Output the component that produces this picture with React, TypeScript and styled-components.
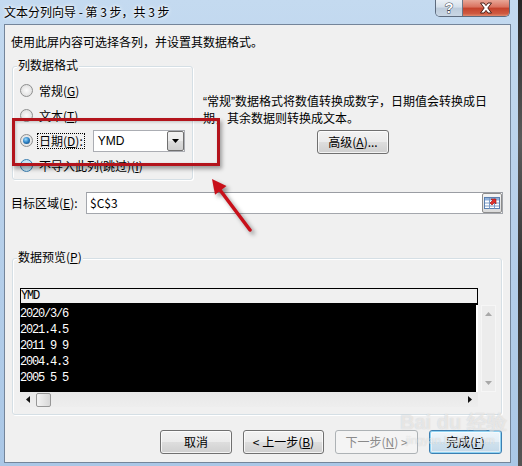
import React from "react";
import styled, { createGlobalStyle, css } from "styled-components";

const Global = createGlobalStyle`
  html, body { margin: 0; padding: 0; }
  body {
    width: 522px; height: 466px; overflow: hidden;
    font-family: "Noto Sans CJK SC", "Microsoft YaHei", sans-serif;
    font-size: 12px; color: #000;
  }
  * { box-sizing: border-box; }
`;

const UI = `"Noto Sans CJK SC", "Microsoft YaHei", sans-serif`;

const Page = styled.div`
  position: relative;
  width: 522px;
  height: 466px;
  display: flex;
  overflow: hidden;
  background: #3c3c3c;
`;

const Frame = styled.div`
  width: 518px;
  height: 466px;
  padding: 0 7px 3px 4px;
  display: flex;
  flex-direction: column;
  background: linear-gradient(180deg, #c4daf0 0%, #bad2eb 35%, #aac7e6 100%);
`;

const DarkEdge = styled.div`
  flex: 1;
  background: linear-gradient(180deg, #262626 0%, #5a5a5a 30%, #333 60%, #555 100%);
`;

const TitleBar = styled.div`
  height: 24px;
  display: flex;
  align-items: flex-start;
`;

const TitleText = styled.div`
  margin-top: 4px;
  line-height: 16px;
  font-family: ${UI};
  font-size: 12px;
  color: #000;
  text-shadow: 0 0 5px #fff, 0 0 3px #fff;
  white-space: pre;
`;

const Spacer = styled.div`
  flex: 1;
`;

const Captions = styled.div`
  display: flex;
  margin-right: 1px;
  height: 17px;
  border: 1px solid #5d6b7e;
  border-top: none;
  border-radius: 0 0 5px 5px;
  overflow: hidden;
`;

const CapBtn = styled.div<{ $w: number; $close?: boolean }>`
  width: ${(p) => p.$w}px;
  height: 16px;
  display: flex;
  align-items: center;
  justify-content: center;
  background: ${(p) =>
    p.$close
      ? "linear-gradient(180deg, #e8a697 0%, #d9705d 45%, #c4412b 50%, #cf5a41 85%, #e08a6e 100%)"
      : "linear-gradient(180deg, #eaf0f6 0%, #d4dfea 45%, #bccbdb 50%, #c9d6e4 100%)"};
  & + & {
    border-left: 1px solid #6b7788;
  }
`;

const HelpGlyph = styled.span`
  font-family: "Liberation Sans", sans-serif;
  font-weight: bold;
  font-size: 14px;
  line-height: 14px;
  color: #fff;
  -webkit-text-stroke: 1px #3b4654;
  paint-order: stroke fill;
`;

const Client = styled.div`
  flex: 1;
  border: 1px solid #74859a;
  background: #f0f0f0;
  display: flex;
  flex-direction: column;
  font-family: ${UI};
  font-size: 12px;
`;

const Intro = styled.div`
  margin: 9px 0 0 6px;
  line-height: 16px;
`;

const TopRow = styled.div`
  margin-top: 16px;
  display: flex;
`;

const GroupBox = styled.div<{ $w: number; $h: number }>`
  position: relative;
  width: ${(p) => p.$w}px;
  height: ${(p) => p.$h}px;
  margin-left: 7px;
  border: 1px solid #d5dfe5;
  border-radius: 3px;
  box-shadow: inset 1px 1px 0 #fff, 1px 1px 0 #fff;
`;

const Legend = styled.span`
  position: absolute;
  left: 4px;
  top: -10px;
  padding: 0 1px;
  line-height: 16px;
  background: #f0f0f0;
`;

const RadioList = styled.div`
  padding: 11px 0 0 7px;
  display: flex;
  flex-direction: column;
`;

const RadioRow = styled.div`
  height: 25px;
  display: flex;
  align-items: center;
`;

const RadioDot = styled.span<{ $checked?: boolean; $hover?: boolean }>`
  position: relative;
  flex: none;
  width: 13px;
  height: 13px;
  border-radius: 50%;
  border: 1px solid ${(p) => (p.$hover ? "#3c7fb1" : "#8e8f8f")};
  background: ${(p) =>
    p.$hover
      ? "radial-gradient(circle at 50% 50%, #e6f4fc 0%, #bfe3f6 70%, #a7d9f5 100%)"
      : "radial-gradient(circle at 50% 50%, #fbfbfb 0%, #e4e4e4 65%, #cfcfcf 100%)"};
  ${(p) =>
    p.$checked &&
    css`
      &::after {
        content: "";
        position: absolute;
        left: 2px;
        top: 2px;
        width: 7px;
        height: 7px;
        border-radius: 50%;
        background: radial-gradient(circle at 40% 35%, #9bdcff 0%, #2b7fc2 50%, #0d3a66 100%);
      }
    `}
`;

const RadioLabel = styled.span<{ $focus?: boolean }>`
  margin-left: 4px;
  line-height: 14px;
  padding: 0 1px;
  border: 1px dotted ${(p) => (p.$focus ? "#000" : "transparent")};
`;

const Combo = styled.div`
  margin-left: 8px;
  width: 92px;
  height: 22px;
  display: flex;
  align-items: center;
  border: 1px solid #abadb3;
  background: #fff;
  padding: 0 0 0 4px;
`;

const ComboText = styled.span`
  flex: 1;
  font-family: "Liberation Sans", Arial, sans-serif;
  font-size: 12px;
`;

const ComboArrow = styled.span`
  width: 17px;
  height: 20px;
  display: flex;
  align-items: center;
  justify-content: center;
  border: 1px solid #707070;
  border-radius: 2px;
  background: linear-gradient(180deg, #f2f2f2 0%, #ebebeb 50%, #dddddd 51%, #cfcfcf 100%);
`;

const RightCol = styled.div`
  margin-left: 10px;
  width: 300px;
  display: flex;
  flex-direction: column;
  padding-top: 27px;
`;

const Desc = styled.div`
  line-height: 16px;
  white-space: nowrap;
`;

const Quote = styled.span`
  font-family: "Liberation Sans", Arial, sans-serif;
`;

const Btn = styled.button<{ $w: number; $disabled?: boolean; $default?: boolean }>`
  width: ${(p) => p.$w}px;
  height: 24px;
  padding: 0;
  margin: 0;
  font-family: ${UI};
  font-size: 12px;
  line-height: 14px;
  color: #000;
  border: 1px solid #707070;
  border-radius: 3px;
  background: linear-gradient(180deg, #f2f2f2 0%, #ebebeb 48%, #dddddd 52%, #cfcfcf 100%);
  box-shadow: inset 0 0 0 1px rgba(255, 255, 255, 0.75);
  ${(p) =>
    p.$disabled &&
    css`
      color: #8a8a8a;
      border-color: #adb2b5;
      background: #f4f4f4;
      box-shadow: none;
    `}
  ${(p) =>
    p.$default &&
    css`
      border-color: #3c7fb1;
      box-shadow: inset 0 0 0 1px #8fd3f3, inset 0 0 0 2px rgba(255, 255, 255, 0.5);
      background: linear-gradient(180deg, #eef6fb 0%, #e3eef6 48%, #d0e2ee 52%, #c3d8e8 100%);
    `}
`;

const AdvBtn = styled(Btn)`
  align-self: center;
  margin-top: 4px;
`;

const TargetRow = styled.div`
  margin: 12px 0 0 6px;
  display: flex;
  align-items: center;
`;

const TargetLabel = styled.span`
  width: 75px;
  line-height: 16px;
`;

const Input = styled.div`
  width: 417px;
  height: 22px;
  display: flex;
  align-items: center;
  border: 1px solid #a4a7ad;
  border-top-color: #9a9da3;
  background: #fff;
  padding-left: 3px;
`;

const InputText = styled.span`
  flex: 1;
  font-family: ${UI};
  font-size: 12px;
  line-height: 16px;
`;

const PickBtn = styled.span`
  width: 20px;
  height: 20px;
  display: flex;
  align-items: center;
  justify-content: center;
  border: 1px solid #8d8d8d;
  border-radius: 2px;
  background: linear-gradient(180deg, #f5f5f5, #dadada);
`;

const PreviewBox = styled(GroupBox)`
  margin-top: 44px;
  padding: 29px 0 0 7px;
  display: flex;
`;

const PreviewArea = styled.div`
  width: 458px;
  display: flex;
  flex-direction: column;
`;

const PreviewHeader = styled.div`
  height: 17px;
  border: 1px solid #000;
  border-bottom: 2px solid #000;
  box-shadow: 0 1px 0 #fff;
  background: #f0f0f0;
  font-family: "Liberation Mono", monospace;
  font-size: 12px;
  letter-spacing: -1.2px;
  line-height: 15px;
`;

const DataArea = styled.div`
  height: 87px;
  padding-top: 1px;
  background: #000;
  border-right: 2px solid #fff;
`;

const DataRow = styled.div`
  height: 16px;
  line-height: 16px;
  color: #fff;
  font-family: "Liberation Mono", monospace;
  font-size: 12px;
  letter-spacing: -1.2px;
  white-space: pre;
`;

const HScroll = styled.div`
  height: 15px;
  display: flex;
  align-items: center;
  background: linear-gradient(180deg, #e8e8e8, #eeeeee);
  padding-left: 6px;
  padding-right: 6px;
`;

const Thumb = styled.span`
  width: 15px;
  height: 14px;
  margin-left: 6px;
  border: 1px solid #979797;
  border-radius: 2px;
  background: linear-gradient(90deg, #f3f3f3 0%, #e6e6e6 50%, #d8d8d8 100%);
`;

const VScroll = styled.div`
  width: 15px;
  height: 87px;
  margin: 17px 0 0 3px;
  display: flex;
  flex-direction: column;
  justify-content: space-between;
  align-items: center;
  padding: 6px 0 6px;
  background: #ececec;
  border: 1px solid #f6f6f6;
`;

const ButtonRow = styled.div`
  margin: 15px 8px 0 0;
  display: flex;
  justify-content: flex-end;
  gap: 11px;
`;

const RedBox = styled.div`
  position: absolute;
  left: 12px;
  top: 118px;
  width: 208px;
  height: 48px;
  border: 3px solid #b3141c;
  box-shadow: 2px 3px 4px rgba(0, 0, 0, 0.35), inset 1px 1px 3px rgba(0, 0, 0, 0.2);
  pointer-events: none;
`;

const ArrowSvg = styled.svg`
  position: absolute;
  left: 200px;
  top: 170px;
  overflow: visible;
  filter: drop-shadow(3px 3px 2px rgba(0, 0, 0, 0.4));
`;

const Watermark = styled.div`
  position: absolute;
  left: 400px;
  top: 410px;
  display: flex;
  flex-direction: column;
  align-items: flex-start;
  white-space: nowrap;
  color: rgba(255, 255, 255, 0.55);
  text-shadow: 0 0 1px rgba(150, 150, 150, 0.45);
  font-family: "Liberation Sans", sans-serif;
  pointer-events: none;
`;

const WmBig = styled.span`
  font-size: 20px;
  font-weight: bold;
  line-height: 24px;
`;

const WmSmall = styled.span`
  margin-left: 6px;
  font-size: 11px;
  line-height: 13px;
`;

const U = styled.u`
  text-decoration: underline;
`;

const Tri = ({ dir, color }: { dir: "up" | "down" | "left" | "right"; color: string }) => {
  const pts = {
    up: "0,4 7,4 3.5,0",
    down: "0,0 7,0 3.5,4",
    left: "4,0 4,7 0,3.5",
    right: "0,0 0,7 4,3.5",
  }[dir];
  const w = dir === "up" || dir === "down" ? 7 : 4;
  const h = dir === "up" || dir === "down" ? 4 : 7;
  return (
    <svg width={w} height={h} viewBox={`0 0 ${w} ${h}`}>
      <polygon points={pts} fill={color} />
    </svg>
  );
};

const rows = ["2020/3/6", "2021.4.5", "2011 9 9", "2004.4.3", "2005 5 5"];

export default function App() {
  return (
    <>
      <Global />
      <Page>
        <Frame>
          <TitleBar>
            <TitleText>文本分列向导 - 第 3 步，共 3 步</TitleText>
            <Spacer />
            <Captions>
              <CapBtn $w={26}>
                <HelpGlyph>?</HelpGlyph>
              </CapBtn>
              <CapBtn $w={47} $close>
                <svg width="14" height="12" viewBox="0 0 14 12">
                  <path
                    d="M1.5 1 L5 1 L7 3.6 L9 1 L12.5 1 L8.8 6 L12.5 11 L9 11 L7 8.4 L5 11 L1.5 11 L5.2 6 Z"
                    fill="#fff"
                    stroke="#4a2018"
                    strokeWidth="1"
                    strokeLinejoin="round"
                  />
                </svg>
              </CapBtn>
            </Captions>
          </TitleBar>
          <Client>
            <Intro>使用此屏内容可选择各列，并设置其数据格式。</Intro>
            <TopRow>
              <GroupBox $w={181} $h={114}>
                <Legend>列数据格式</Legend>
                <RadioList>
                  <RadioRow>
                    <RadioDot />
                    <RadioLabel>
                      常规(<U>G</U>)
                    </RadioLabel>
                  </RadioRow>
                  <RadioRow>
                    <RadioDot />
                    <RadioLabel>
                      文本(<U>T</U>)
                    </RadioLabel>
                  </RadioRow>
                  <RadioRow>
                    <RadioDot $checked />
                    <RadioLabel $focus>
                      日期(<U>D</U>):
                    </RadioLabel>
                    <Combo>
                      <ComboText>YMD</ComboText>
                      <ComboArrow>
                        <Tri dir="down" color="#000" />
                      </ComboArrow>
                    </Combo>
                  </RadioRow>
                  <RadioRow>
                    <RadioDot $hover />
                    <RadioLabel>
                      不导入此列(跳过)(<U>I</U>)
                    </RadioLabel>
                  </RadioRow>
                </RadioList>
              </GroupBox>
              <RightCol>
                <Desc>
                  <Quote>“</Quote>常规<Quote>”</Quote>数据格式将数值转换成数字，日期值会转换成日
                </Desc>
                <Desc>期，其余数据则转换成文本。</Desc>
                <AdvBtn $w={72}>
                  高级(<U>A</U>)...
                </AdvBtn>
              </RightCol>
            </TopRow>
            <TargetRow>
              <TargetLabel>
                目标区域(<U>E</U>):
              </TargetLabel>
              <Input>
                <InputText>$C$3</InputText>
                <PickBtn>
                  <svg width="16" height="14" viewBox="0 0 16 14">
                    <rect x="0.5" y="1.5" width="15" height="11" fill="#fff" stroke="#5a7fb0" />
                    <rect x="1" y="2" width="14" height="2.5" fill="#8fb2dc" />
                    <path d="M1 7 H15 M1 10 H15 M5.5 2 V12.5 M10.5 2 V12.5" stroke="#7d9cc6" strokeWidth="1" />
                    <path d="M7 3 L12 3 L12 8 L10.5 6.5 L8 9 L6 7 L8.5 4.5 Z" fill="#e0302a" stroke="#9a1410" strokeWidth="0.6" />
                  </svg>
                </PickBtn>
              </Input>
            </TargetRow>
            <PreviewBox $w={490} $h={157}>
              <Legend>
                数据预览(<U>P</U>)
              </Legend>
              <PreviewArea>
                <PreviewHeader>YMD</PreviewHeader>
                <DataArea>
                  {rows.map((r) => (
                    <DataRow key={r}>{r}</DataRow>
                  ))}
                </DataArea>
                <HScroll>
                  <Tri dir="left" color="#111" />
                  <Thumb />
                  <Spacer />
                  <Tri dir="right" color="#111" />
                </HScroll>
              </PreviewArea>
              <VScroll>
                <Tri dir="up" color="#a8a8a8" />
                <Tri dir="down" color="#a8a8a8" />
              </VScroll>
            </PreviewBox>
            <ButtonRow>
              <Btn $w={72}>取消</Btn>
              <Btn $w={81}>
                &lt; 上一步(<U>B</U>)
              </Btn>
              <Btn $w={83} $disabled>
                下一步(<U>N</U>) &gt;
              </Btn>
              <Btn $w={73} $default>
                完成(<U>F</U>)
              </Btn>
            </ButtonRow>
          </Client>
        </Frame>
        <DarkEdge />
        <RedBox />
        <ArrowSvg width="60" height="65" viewBox="0 0 60 65">
          <line x1="50" y1="60" x2="20" y2="20" stroke="#c8101a" strokeWidth="3.5" strokeLinecap="round" />
          <polygon points="12,9 26.5,16 15,24.8" fill="#c8101a" />
        </ArrowSvg>
        <Watermark>
          <WmBig>Bai du 经验</WmBig>
          <WmSmall>jingyan.baidu.com</WmSmall>
        </Watermark>
      </Page>
    </>
  );
}
